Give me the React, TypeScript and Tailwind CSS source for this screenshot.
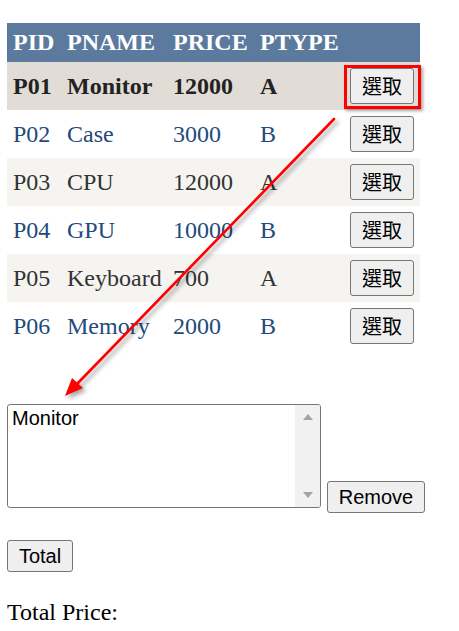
import React from "react";

type Product = { pid: string; name: string; price: number; type: string };

const products: Product[] = [
  { pid: "P01", name: "Monitor", price: 12000, type: "A" },
  { pid: "P02", name: "Case", price: 3000, type: "B" },
  { pid: "P03", name: "CPU", price: 12000, type: "A" },
  { pid: "P04", name: "GPU", price: 10000, type: "B" },
  { pid: "P05", name: "Keyboard", price: 700, type: "A" },
  { pid: "P06", name: "Memory", price: 2000, type: "B" },
];

const serif = "font-['Liberation_Serif','Times_New_Roman',serif]";
const sans = "font-['Liberation_Sans',Arial,sans-serif]";

function rowClass(i: number) {
  if (i === 0) return "bg-[#e1ddd6] font-bold text-[#222222]";
  if (i % 2 === 0) return "bg-[#f5f4f1] text-[#333333]";
  return "bg-white text-[#234a7c]";
}

export default function App() {
  return (
    <div className={`relative min-h-[631px] w-[459px] bg-white pl-[7px] pt-[23px] ${serif}`}>
      <table className="w-[413px] table-fixed border-collapse text-[24px] leading-[28px]">
        <thead>
          <tr className="bg-[#5b7a9e] text-left font-bold text-white">
            <th className="w-[54px] px-[6px] pb-[6px] pt-[5px]">PID</th>
            <th className="w-[106px] px-[6px] pb-[6px] pt-[5px]">PNAME</th>
            <th className="w-[87px] px-[6px] pb-[6px] pt-[5px]">PRICE</th>
            <th className="w-[90px] px-[6px] pb-[6px] pt-[5px]">PTYPE</th>
            <th className="w-[76px] px-[6px] pb-[6px] pt-[5px]"></th>
          </tr>
        </thead>
        <tbody>
          {products.map((p, i) => (
            <tr key={p.pid} className={rowClass(i)}>
              <td className="px-[6px] py-0 align-middle whitespace-nowrap">{p.pid}</td>
              <td className="px-[6px] py-0 align-middle whitespace-nowrap">{p.name}</td>
              <td className="px-[6px] py-0 align-middle whitespace-nowrap">{p.price}</td>
              <td className="px-[6px] py-0 align-middle whitespace-nowrap">{p.type}</td>
              <td className="px-[6px] py-[6px] align-middle">
                <button className="flex h-[36px] w-[64px] items-center justify-center rounded-[3px] border border-[#767676] bg-[#efefef] font-['Noto_Sans_CJK_TC',sans-serif] text-[20px] font-normal leading-none text-black">
                  選取
                </button>
              </td>
            </tr>
          ))}
        </tbody>
      </table>

      <div className="mt-[54px] flex h-[109px] gap-[6px]">
        <div className="relative h-[104px] w-[314px] overflow-hidden rounded-[3px] border border-[#767676] bg-white">
          <div className={`pl-[4px] pt-[1px] text-[20px] leading-[24px] text-black ${sans}`}>Monitor</div>
          <div className="absolute right-0 top-0 flex h-full w-[25px] flex-col items-center justify-between bg-[#f1f1f1] py-[9px]">
            <span className="h-0 w-0 border-x-[5px] border-b-[6px] border-x-transparent border-b-[#a3a3a3]" />
            <span className="h-0 w-0 border-x-[5px] border-t-[6px] border-x-transparent border-t-[#a3a3a3]" />
          </div>
        </div>
        <button className={`h-[32px] w-[98px] self-end rounded-[3px] border border-[#767676] bg-[#efefef] text-[20px] leading-none text-black ${sans}`}>
          Remove
        </button>
      </div>

      <button className={`mt-[27px] block h-[32px] w-[66px] rounded-[3px] border border-[#767676] bg-[#efefef] text-[20px] leading-none text-black ${sans}`}>
        Total
      </button>

      <p className="mt-[26px] text-[24px] leading-[28px] text-black">Total Price:</p>

      {/* annotation: red highlight box + arrow */}
      <div className="pointer-events-none absolute left-[344px] top-[65px] h-[44px] w-[77px] border-[3px] border-[#ff0000] shadow-[2px_2px_3px_rgba(0,0,0,0.35)]" />
      <svg
        className="pointer-events-none absolute left-0 top-0"
        width="459"
        height="631"
        style={{ filter: "drop-shadow(3px 3px 2px rgba(0,0,0,0.35))" }}
      >
        <line x1="334" y1="119" x2="77" y2="384" stroke="#ff0000" strokeWidth="2.6" strokeLinecap="round" />
        <polygon points="65,396 83,388 72,378" fill="#ff0000" />
      </svg>
    </div>
  );
}
